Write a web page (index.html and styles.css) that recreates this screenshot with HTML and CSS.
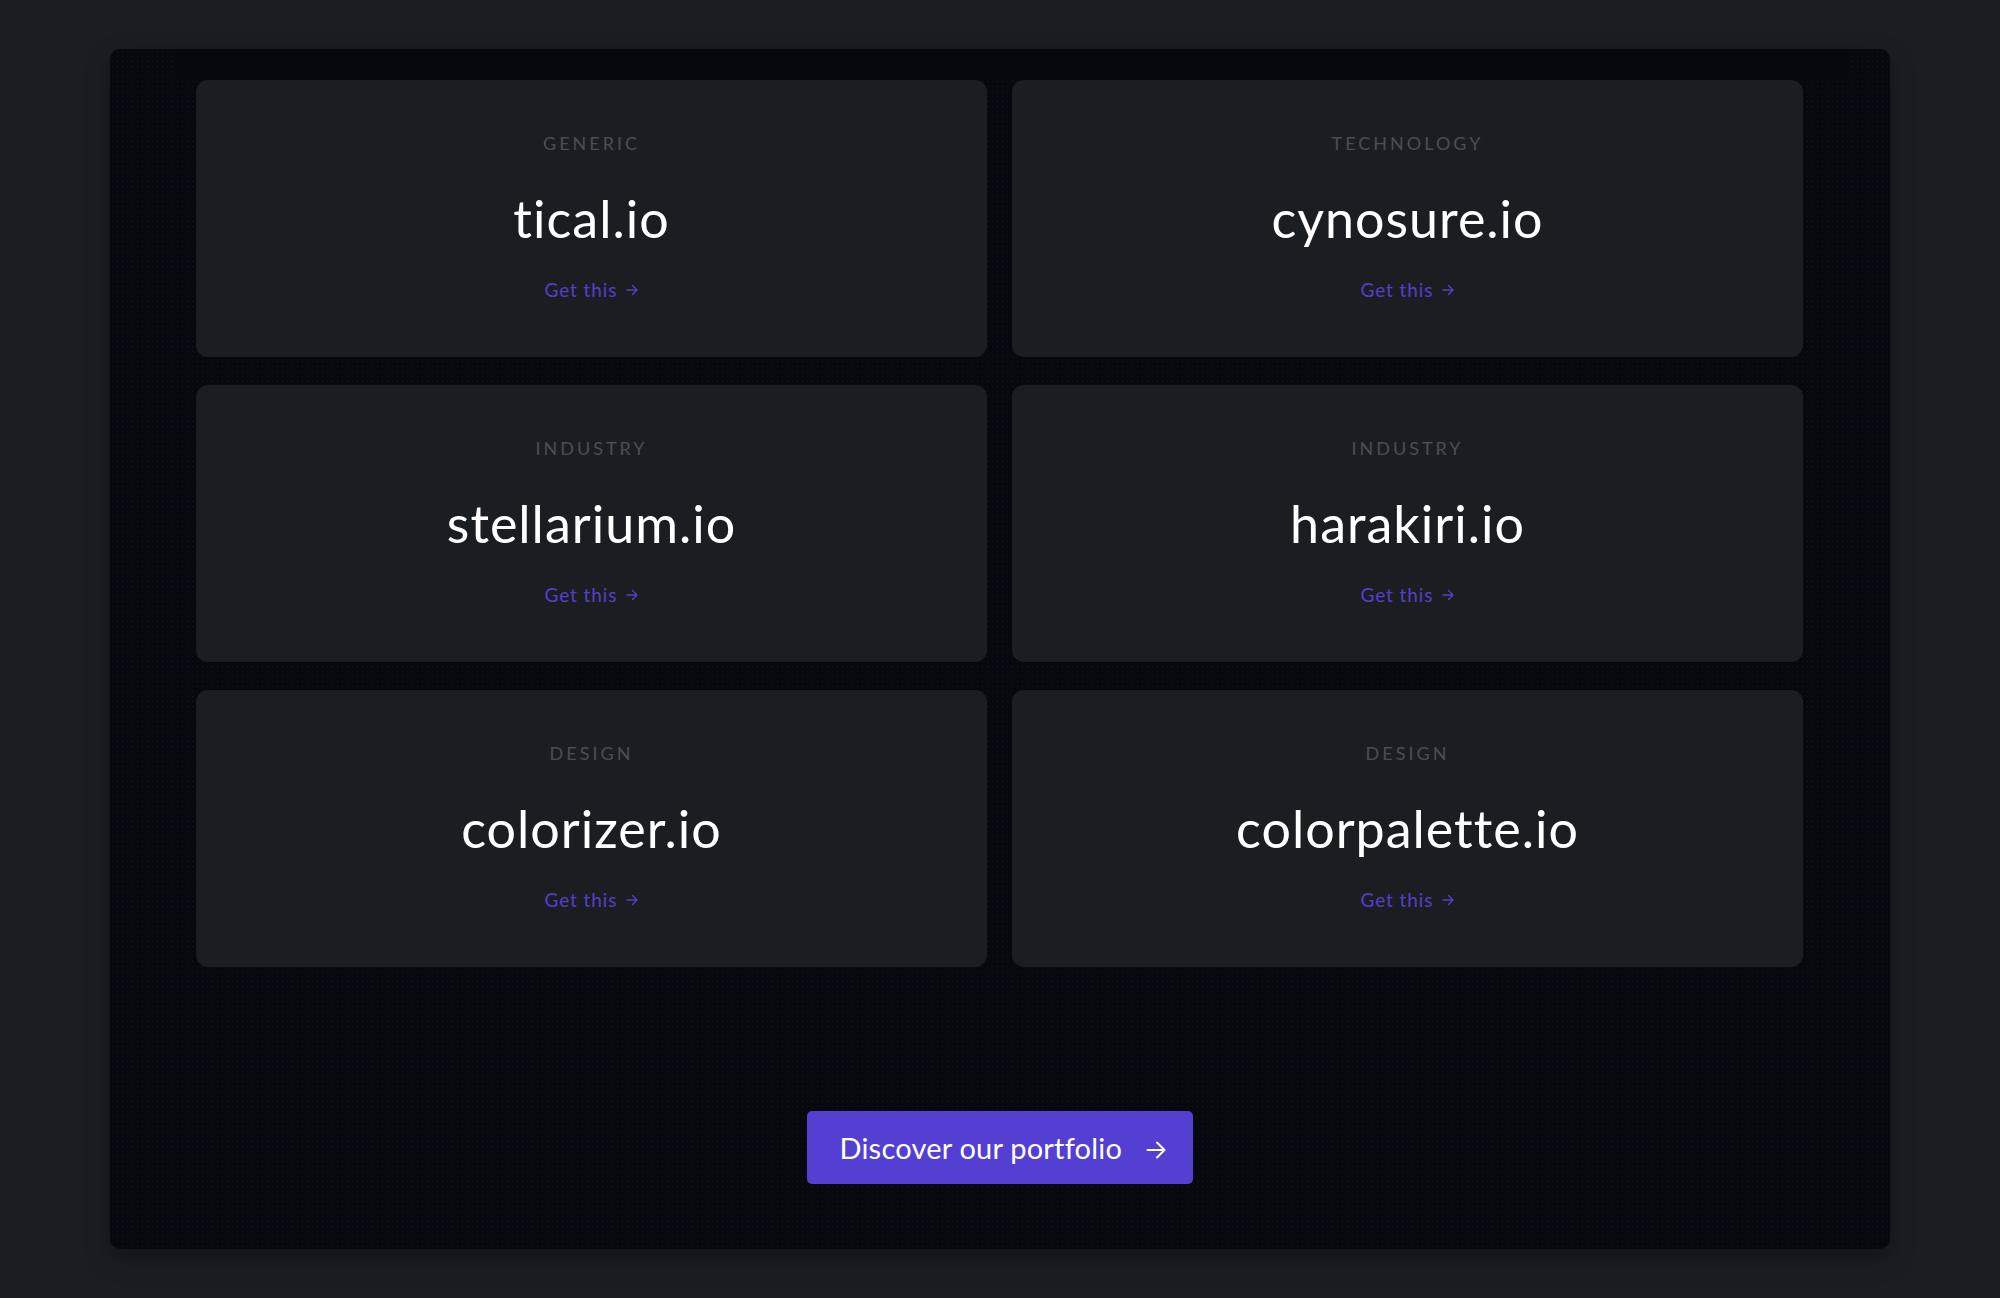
FILE: index.html
```html
<!DOCTYPE html>
<html lang="en">
<head>
<meta charset="utf-8">
<title>Portfolio domains</title>
<link rel="stylesheet" href="styles.css">
</head>
<body>
<main class="panel">
  <div class="panel-top"></div>
  <section class="grid">
    <article class="card">
      <p class="card-label">Generic</p>
      <h2 class="card-domain">tical.io</h2>
      <a class="card-link" href="#">Get this<svg class="arrow-sm" viewBox="0 0 12 12" width="12" height="12"><path d="M1 6h10M6.5 1.5L11 6l-4.5 4.5" fill="none" stroke="currentColor" stroke-width="1.4" stroke-linecap="round" stroke-linejoin="round"/></svg></a>
    </article>
    <article class="card">
      <p class="card-label">Technology</p>
      <h2 class="card-domain">cynosure.io</h2>
      <a class="card-link" href="#">Get this<svg class="arrow-sm" viewBox="0 0 12 12" width="12" height="12"><path d="M1 6h10M6.5 1.5L11 6l-4.5 4.5" fill="none" stroke="currentColor" stroke-width="1.4" stroke-linecap="round" stroke-linejoin="round"/></svg></a>
    </article>
    <article class="card">
      <p class="card-label">Industry</p>
      <h2 class="card-domain">stellarium.io</h2>
      <a class="card-link" href="#">Get this<svg class="arrow-sm" viewBox="0 0 12 12" width="12" height="12"><path d="M1 6h10M6.5 1.5L11 6l-4.5 4.5" fill="none" stroke="currentColor" stroke-width="1.4" stroke-linecap="round" stroke-linejoin="round"/></svg></a>
    </article>
    <article class="card">
      <p class="card-label">Industry</p>
      <h2 class="card-domain">harakiri.io</h2>
      <a class="card-link" href="#">Get this<svg class="arrow-sm" viewBox="0 0 12 12" width="12" height="12"><path d="M1 6h10M6.5 1.5L11 6l-4.5 4.5" fill="none" stroke="currentColor" stroke-width="1.4" stroke-linecap="round" stroke-linejoin="round"/></svg></a>
    </article>
    <article class="card">
      <p class="card-label">Design</p>
      <h2 class="card-domain">colorizer.io</h2>
      <a class="card-link" href="#">Get this<svg class="arrow-sm" viewBox="0 0 12 12" width="12" height="12"><path d="M1 6h10M6.5 1.5L11 6l-4.5 4.5" fill="none" stroke="currentColor" stroke-width="1.4" stroke-linecap="round" stroke-linejoin="round"/></svg></a>
    </article>
    <article class="card">
      <p class="card-label">Design</p>
      <h2 class="card-domain">colorpalette.io</h2>
      <a class="card-link" href="#">Get this<svg class="arrow-sm" viewBox="0 0 12 12" width="12" height="12"><path d="M1 6h10M6.5 1.5L11 6l-4.5 4.5" fill="none" stroke="currentColor" stroke-width="1.4" stroke-linecap="round" stroke-linejoin="round"/></svg></a>
    </article>
  </section>
  <div class="cta-row">
    <a class="cta" href="#">Discover our portfolio <svg class="arrow-lg" viewBox="0 0 20 20" width="20" height="20"><path d="M1.5 10h17M11 2.5L18.5 10 11 17.5" fill="none" stroke="currentColor" stroke-width="2" stroke-linecap="round" stroke-linejoin="round"/></svg></a>
  </div>
</main>
</body>
</html>
```
FILE: styles.css
```css
* { box-sizing: border-box; }

html, body {
  margin: 0;
  padding: 0;
  background: #1b1e21;
}

body {
  font-family: Lato, "Open Sans", sans-serif;
  color: #fff;
  padding: 49px 0 49px;
}

.panel {
  width: 1780px;
  height: 1200px;
  margin: 0 auto;
  padding: 0 87px 65px 86px;
  background-color: #05080c;
  background-image: radial-gradient(circle, #121820 0.6px, transparent 1px);
  background-size: 5px 5px;
  border-radius: 10px;
  box-shadow: 0 10px 24px rgba(0, 0, 0, 0.35);
  display: flex;
  flex-direction: column;
}

.panel-top {
  height: 31px;
  margin: 0 -47px 0 -19px;
  background: #05080c;
}

.grid {
  display: grid;
  grid-template-columns: 1fr 1fr;
  column-gap: 25px;
  row-gap: 28px;
}

.card {
  height: 277px;
  background: #1b1e21;
  border-radius: 12px;
  display: flex;
  flex-direction: column;
  align-items: center;
  padding-top: 53.6px;
}

.card-label {
  margin: 0;
  font-size: 18px;
  line-height: 18px;
  letter-spacing: 3px;
  text-transform: uppercase;
  color: #4a4d55;
  font-weight: 400;
}

.card-domain {
  margin: 40px 0 0;
  font-size: 52px;
  line-height: 52px;
  font-weight: 400;
  letter-spacing: 1px;
  color: #ffffff;
}

.card-link {
  margin-top: 36.3px;
  font-size: 19px;
  line-height: 19px;
  letter-spacing: 0.9px;
  color: #5240cd;
  text-decoration: none;
  display: flex;
  align-items: center;
  gap: 9px;
}

.arrow-sm { display: block; margin-top: 1px; }

.cta-row {
  margin-top: 144px;
  display: flex;
  justify-content: center;
}

.cta {
  width: 386px;
  height: 73px;
  background: #5340d3;
  border-radius: 5px;
  color: #fff;
  text-decoration: none;
  font-size: 29px;
  line-height: 29px;
  letter-spacing: 0.2px;
  display: flex;
  align-items: center;
  justify-content: space-between;
  padding: 0 27px 0 33px;
}

.arrow-lg { display: block; margin-top: 4px; }
```
